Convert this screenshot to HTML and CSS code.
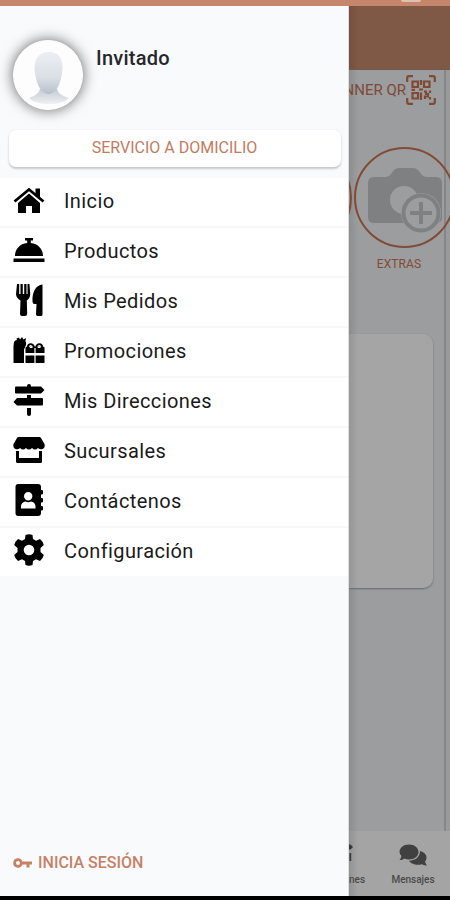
FILE: index.html
```html
<!DOCTYPE html>
<html lang="es">
<head>
<meta charset="utf-8">
<title>Menú</title>
<link rel="stylesheet" href="styles.css">
</head>
<body>
<div class="status"><span class="battery"></span></div>
<div class="screen">
  <aside class="drawer">
    <header class="profile">
      <div class="avatar">
        <svg viewBox="0 0 70 70" width="70" height="70">
          <defs>
            <linearGradient id="face" x1="0" y1="0" x2="0" y2="1"><stop offset="0" stop-color="#eceef1"/><stop offset=".6" stop-color="#dbe0e6"/><stop offset="1" stop-color="#b6c0cb"/></linearGradient>
            <linearGradient id="bust" x1="0" y1="0" x2="0" y2="1"><stop offset="0" stop-color="#c3cbd4"/><stop offset="1" stop-color="#eef0f3"/></linearGradient>
          </defs>
          <path fill="url(#bust)" d="M26 48Q25 54 15 57Q20 63 35 63T55 57Q44 54 43 48Z"/>
          <path fill="url(#face)" d="M35 11C25 11 20 18 20.500 28C21 37 25 53 34.500 53C44 53 48 37 48.500 28C49 18 45 11 35 11Z"/>
        </svg>
      </div>
      <div class="name">Invitado</div>
    </header>
    <button class="service">SERVICIO A DOMICILIO</button>
    <nav class="menu">
      <a class="item"><svg class="icon" viewBox="0 0 32 32"><path d="M5 19 16 9.500 27 19V29H19V22H13V29H5Z"/><path d="M1.500 17.500 16 5.500 30.500 17.500" fill="none" stroke="#000" stroke-width="2.800"/><path d="M22.500 4.500H27V14L22.500 10Z"/></svg><span>Inicio</span></a>
      <a class="item"><svg class="icon" viewBox="0 0 32 32"><path d="M12 4H20V6.500H17.800V9C25 9.700 30 15 30 22H2C2 15 7 9.700 14.200 9V6.500H12ZM.500 24.500H31.500V28H.500Z"/></svg><span>Productos</span></a>
      <a class="item"><svg class="icon" viewBox="0 0 32 32"><path d="M4 0H6.200V10H7.500V0H9.800V10H11.200V0H13.500V10H14.500V0H16.500L17.200 10C17.200 14 15 15.500 13.800 16.500L14.200 30Q14 32 12 32H9Q7 32 7 30L7.500 16.500C5 15 3 13 3 10ZM29.500 1V30.500Q29.500 32 28 32H24.500Q23 32 23 30L23.500 20H21.500Q19.500 20 19.500 17.500C19 9 22.500 1 29.500 .500Z"/></svg><span>Mis Pedidos</span></a>
      <a class="item"><svg class="icon" viewBox="0 0 32 32"><path d="M1 8Q2 6 4 6L3.500 4.500 6 3.500 7 5.500 9 3 10.500 5.500 13 4 12.500 7Q13.500 9 13 11L11 15.500V29H.500V12Z"/><path d="M12.500 19V14Q12.500 12.800 13.700 12.800H30.300Q31.500 12.800 31.500 14V19ZM12.500 21.500H31.500V29H12.500Z"/><path d="M14.700 13.500C15 9 20 9 21.200 13.500M23 13.500C24 9 29 9 29.300 13.500" fill="none" stroke="#000" stroke-width="1.800"/><path d="M16.500 14Q18 10.800 20 14ZM24.300 14Q26 10.800 28 14Z" fill="#fff"/><path d="M22 14V29" stroke="#fff" stroke-width="1.200"/></svg><span>Promociones</span></a>
      <a class="item"><svg class="icon" viewBox="0 0 32 32"><path d="M14 2Q14 0 16 0T18 2V2.500H28L31.500 6 28 9.500H3Q2 9.500 2 8.500V3.500Q2 2.500 3 2.500H14ZM14 11H18V14H29Q30 14 30 15V20Q30 21.500 29 21.500H4L.500 18 4 14H14ZM14 24H18V30Q18 32 16 32T14 30Z"/></svg><span>Mis Direcciones</span></a>
      <a class="item"><svg class="icon" viewBox="0 0 32 32"><path d="M5.500 3H26.500Q27.500 3 28 4L31.500 10Q32.500 14 29.500 15Q27 16 25 14Q22 17 19 14Q16 17 13 14Q10 17 7 14Q5 16 2.500 15Q-.500 14 .500 10L4 4Q4.500 3 5.500 3ZM3 17H6V24H26V17H29V27.500Q29 29 27.500 29H4.500Q3 29 3 27.500Z"/></svg><span>Sucursales</span></a>
      <a class="item"><svg class="icon" viewBox="0 0 32 32"><path fill-rule="evenodd" d="M5 0H25Q28 0 28 3V6H29Q30 6 30 7V9.500Q30 10.500 29 10.500H28V14H29Q30 14 30 15V17.500Q30 18.500 29 18.500H28V22H29Q30 22 30 23V25.500Q30 26.500 29 26.500H28V29Q28 32 25 32H5Q2.500 32 2.500 29V3Q2.500 0 5 0ZM15.200 8A4.200 4.200 0 1 0 15.200 16.400A4.200 4.200 0 1 0 15.200 8ZM8 24.500H22.500V22Q22 18 18 17.500Q15.200 19 12.500 17.500Q8.500 18 8 22Z"/></svg><span>Contáctenos</span></a>
      <a class="item"><svg class="icon" viewBox="0 0 32 32"><path fill-rule="evenodd" d="M12.500 1Q16-.500 19.500 1L20 5 23 6.700 27 5Q30 7.500 30.800 11L27.500 14V18L30.800 21Q30 24.500 27 27L23 25.300 20 27 19.500 31Q16 32.500 12.500 31L12 27 9 25.300 5 27Q2 24.500 1.200 21L4.500 18V14L1.200 11Q2 7.500 5 5L9 6.700 12 5ZM16 10.700A5.300 5.300 0 1 0 16 21.300A5.300 5.300 0 1 0 16 10.700Z"/></svg><span>Configuración</span></a>
    </nav>
    <a class="login"><svg width="20" height="12" viewBox="0 0 20 12"><path fill="#c68267" fill-rule="evenodd" d="M5 1.300A4.700 4.700 0 1 0 9.400 7.600H13.500V10.500H16.500V7.600H19V4.500H9.400A4.700 4.700 0 0 0 5 1.300ZM5 4A2 2 0 1 0 5 8A2 2 0 1 0 5 4Z"/></svg><span>INICIA SESIÓN</span></a>
  </aside>
  <main class="page">
    <div class="appbar"></div>
    <div class="content">
      <div class="scanner"><span>NNER QR</span>
        <svg width="30" height="30" viewBox="0 0 30 30" fill="none" stroke="#7d4a36" stroke-width="2.200"><path d="M1.200 7V3Q1.200 1.200 3 1.200H7M23 1.200H27Q28.800 1.200 28.800 3V7M28.800 23V27Q28.800 28.800 27 28.800H23M7 28.800H3Q1.200 28.800 1.200 27V23"/><path d="M6.500 6.500H12V12H6.500ZM18 6.500H23.500V12H18ZM6.500 18H12V23.500H6.500ZM15 5V10M13 14.500H17M5.500 14.800H9M15 17.500V25M18 16.500H20V19H22V21.500H19V24M24 15.500V18M24 22V24.500"/></svg>
      </div>
      <div class="categories">
        <div class="circle"></div>
        <div class="category">
          <div class="circle"><svg width="100" height="100" viewBox="0 0 100 100"><path fill="#7f8081" d="M19 29H31Q34 29 36 26L39 22Q41 20 44 20H58Q61 20 63 22L67 27Q69 29 72 29H81Q87 29 87 35V69Q87 75 81 75H19Q13 75 13 69V35Q13 29 19 29Z"/><circle cx="49" cy="52" r="14" fill="#9c9d9f"/><circle cx="66" cy="65" r="20" fill="#9c9d9f"/><circle cx="66" cy="65" r="17.500" fill="#9c9d9f" stroke="#7f8081" stroke-width="4"/><path d="M55 65H77M66 54V76" stroke="#7f8081" stroke-width="4"/></svg></div>
          <span>EXTRAS</span>
        </div>
      </div>
      <div class="card"></div>
    </div>
    <div class="tabs">
      <div class="tab"><svg width="8" height="24" viewBox="0 0 8 24"><path fill="#383838" d="M0 1.500H1.500L4 4 1.500 6.500H0ZM.500 10H2.200V18H.500Z"/></svg><span>nes</span></div>
      <div class="tab"><svg width="28" height="24" viewBox="0 0 28 24"><path fill="#404040" d="M10 1.500C15.500 1.500 19.500 5 19.500 9S15.500 16.500 10 16.500Q7.500 16.500 5.500 15.500Q3.500 17 .500 17Q2 15.500 2.500 13Q.500 11 .500 9C.500 5 4.500 1.500 10 1.500ZM21 8C25 9 27.500 11.500 27.500 14.500Q27.500 17 26 18.500Q26.500 20.500 28 22.500Q25 22.500 23 21.200C17 23 11.500 20.500 10 17.800C16 17.800 21 14 21 8Z"/></svg><span>Mensajes</span></div>
    </div>
  </main>
</div>
<div class="bottom"></div>
</body>
</html>
```
FILE: styles.css
```css
* { box-sizing: border-box; }
body { margin: 0; width: 450px; height: 900px; overflow: hidden; display: flex; flex-direction: column; font-family: Roboto, sans-serif; background: #000; }
.status { height: 6px; flex: none; background: #c5866b; display: flex; justify-content: flex-end; padding-right: 29px; }
.battery { width: 20px; height: 2px; background: #dfc0b3; border-radius: 0 0 2px 2px; }
.screen { height: 890px; display: flex; }
.bottom { height: 4px; background: #000; }
.drawer { width: 349px; flex: none; background: #f9fafc; display: flex; flex-direction: column; border-right: 1px solid #dcdddd; }
.profile { height: 124px; flex: none; display: flex; padding: 34px 0 0 13px; gap: 13px; }
.avatar { width: 70px; height: 70px; border-radius: 50%; overflow: hidden; background: #fdfdfe; border: 1px solid #fff; box-shadow: 0 0 13px 1px #777; }
.avatar svg { display: block; }
.name { color: #26272a; font-size: 20px; font-weight: 500; line-height: 24px; padding-top: 6px; letter-spacing: .25px; }
.service { height: 37px; flex: none; margin: 0 7px 0 9px; border: 0; border-radius: 7px; background: #fff; color: #c37b60; font: 400 16px/35px Roboto, sans-serif; padding: 0 1px 2px 0; box-shadow: 0 2px 2px #c8c9cb, 0 0 2px #e4e5e7; }
.menu { margin-top: 11px; background: #fff; display: flex; flex-direction: column; }
.item { height: 50px; display: flex; align-items: center; padding: 0 0 2px 13px; gap: 19px; border-bottom: 2px solid #f8f8f8; color: #1a1a1a; font-size: 20px; letter-spacing: .4px; }
.item:last-child { height: 48px; border: 0; }
.icon { width: 32px; height: 32px; flex: none; margin-top: -2px; }
.login { margin-top: auto; height: 66px; display: flex; align-items: flex-start; padding: 23px 0 0 13px; gap: 5px; color: #c68267; font-size: 16px; font-weight: 500; line-height: 20px; }
.login svg { margin-top: 4px; }
.page { width: 101px; overflow: hidden; display: flex; flex-direction: column; background: #9c9d9f; }
.appbar { height: 64px; flex: none; background: linear-gradient(90deg, #745040, #7f5846 9px); border-bottom: 1px solid #76584a; }
.content { height: 761px; flex: none; background: linear-gradient(90deg, #8c8d8f, #9c9d9f 9px); border-right: 4px solid #999a9c; box-shadow: inset -2px 0 0 #858688; }
.scanner { height: 77px; padding: 5px 10px 0 0; display: flex; justify-content: flex-end; align-items: flex-start; color: #7d4a36; font-size: 15px; line-height: 30px; white-space: nowrap; }
.scanner svg { flex: none; }
.categories { display: flex; justify-content: flex-end; gap: 2px; height: 187px; margin-right: -9px; }
.circle { width: 101px; height: 101px; border: 2px solid #824b36; border-radius: 50%; flex: none; }
.circle svg { display: block; margin: -1px; }
.category { color: #824b36; font-size: 12px; text-align: center; flex: none; }
.category span { display: block; margin: 8px 11px 0 0; line-height: 16px; letter-spacing: .1px; }
.card { height: 254px; width: 84px; background: linear-gradient(90deg, #969696, #a5a5a5 9px); border-radius: 0 10px 10px 0; box-shadow: 0 1px 2px #666; }
.tabs { height: 65px; flex: none; background: linear-gradient(90deg, #929292, #a4a4a4 9px); display: flex; justify-content: space-between; }
.tab { width: 74px; flex: none; display: flex; flex-direction: column; align-items: center; padding-top: 12px; color: #4a4a4a; font-size: 10px; font-weight: 500; line-height: 12px; gap: 7px; }
.tab:first-child { width: 17px; align-items: flex-start; }
```
